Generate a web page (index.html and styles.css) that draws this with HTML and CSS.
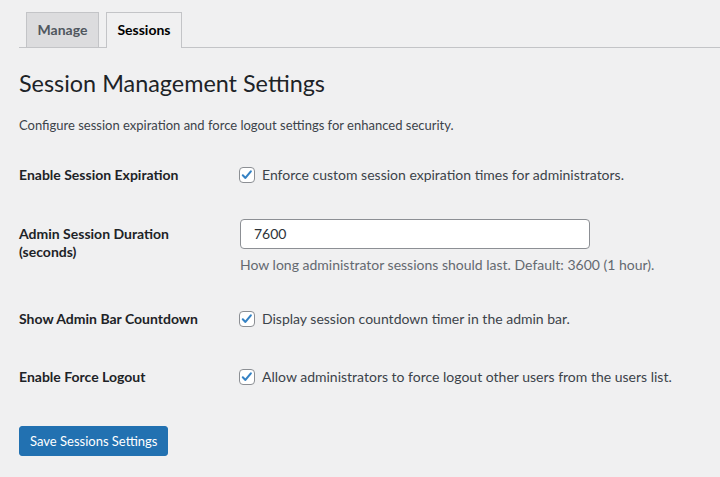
FILE: index.html
```html
<!DOCTYPE html>
<html lang="en">
<head>
    <meta charset="UTF-8">
    <meta name="viewport" content="width=device-width, initial-scale=1.0">
    <title>Session Management Settings</title>
    <link rel="stylesheet" href="styles.css">
</head>
<body>
    <div class="wrap">
        <nav class="nav-tab-wrapper">
            <a href="#" class="nav-tab">Manage</a>
            <a href="#" class="nav-tab nav-tab-active">Sessions</a>
        </nav>

        <h1>Session Management Settings</h1>
        <p class="intro">Configure session expiration and force logout settings for enhanced security.</p>

        <form>
            <table class="form-table">
                <tr>
                    <th>Enable Session Expiration</th>
                    <td>
                        <label class="check"><input type="checkbox" checked> Enforce custom session expiration times for administrators.</label>
                    </td>
                </tr>
                <tr>
                    <th>Admin Session Duration (seconds)</th>
                    <td>
                        <input type="text" class="regular-text" value="7600">
                        <p class="description">How long administrator sessions should last. Default: 3600 (1 hour).</p>
                    </td>
                </tr>
                <tr>
                    <th>Show Admin Bar Countdown</th>
                    <td>
                        <label class="check"><input type="checkbox" checked> Display session countdown timer in the admin bar.</label>
                    </td>
                </tr>
                <tr>
                    <th>Enable Force Logout</th>
                    <td>
                        <label class="check"><input type="checkbox" checked> Allow administrators to force logout other users from the users list.</label>
                    </td>
                </tr>
            </table>

            <p class="submit"><button type="button" class="button-primary">Save Sessions Settings</button></p>
        </form>
    </div>
</body>
</html>
```

FILE: styles.css
```css
body {
    margin: 0;
    background-color: #f0f0f1;
    color: #3c434a;
    font-family: Lato, sans-serif;
    font-size: 13px;
}
.wrap {
    padding-left: 19px;
}
.nav-tab-wrapper {
    display: flex;
    padding-top: 12px;
    border-bottom: 1px solid #c3c4c7;
}
.nav-tab {
    margin-left: 7px;
    padding: 5px 10.5px;
    border: 1px solid #c3c4c7;
    border-bottom: none;
    background-color: #dcdcde;
    color: #50575e;
    font-size: 14px;
    font-weight: 700;
    line-height: 24px;
    text-decoration: none;
}
.nav-tab-active {
    margin-bottom: -1px;
    padding-bottom: 6px;
    background-color: #f0f0f1;
    color: #000;
}
h1 {
    margin: 20px 0 0;
    color: #1d2327;
    font-size: 23.4px;
    font-weight: 400;
    line-height: 30px;
}
.intro {
    margin: 17px 0 0;
    line-height: 20px;
}
.form-table {
    margin-top: 11px;
    border-collapse: collapse;
}
.form-table th {
    width: 200px;
    padding: 20px 10px 20px 0;
    color: #1d2327;
    font-size: 14px;
    font-weight: 700;
    line-height: 18.5px;
    text-align: left;
    vertical-align: top;
}
.form-table td {
    padding: 14px 10px 15px;
    font-size: 14px;
    line-height: 20px;
    vertical-align: top;
}
.check {
    display: flex;
    align-items: center;
    gap: 7px;
    padding-top: 5px;
}
.check input {
    appearance: none;
    width: 16px;
    height: 16px;
    margin: 0;
    border: 1px solid #8c8f94;
    border-radius: 4px;
    background: #fff center / 14px no-repeat;
}
.check input:checked {
    background-image: url("data:image/svg+xml,%3Csvg xmlns='http://www.w3.org/2000/svg' viewBox='0 0 16 16'%3E%3Cpath d='M3.2 8.4l3 2.9 6.2-7.4' fill='none' stroke='%233582c4' stroke-width='2.4' stroke-linecap='round' stroke-linejoin='round'/%3E%3C/svg%3E");
}
.regular-text {
    box-sizing: border-box;
    display: block;
    width: 350px;
    height: 30px;
    margin: 0 0 0 1px;
    padding: 0 8px 0 13px;
    border: 1px solid #8c8f94;
    border-radius: 4px;
    background: #fff;
    color: #2c3338;
    font-family: inherit;
    font-size: 14px;
}
.description {
    margin: 6px 0 0 1px;
    color: #646970;
    font-size: 14px;
    line-height: 20px;
}
.submit {
    margin: 19px 0 0;
}
.button-primary {
    height: 30px;
    padding: 0 10px;
    border: 1px solid #2271b1;
    border-radius: 3px;
    background-color: #2271b1;
    color: #fff;
    font-family: inherit;
    font-size: 13px;
    line-height: 28px;
    cursor: pointer;
}
```
